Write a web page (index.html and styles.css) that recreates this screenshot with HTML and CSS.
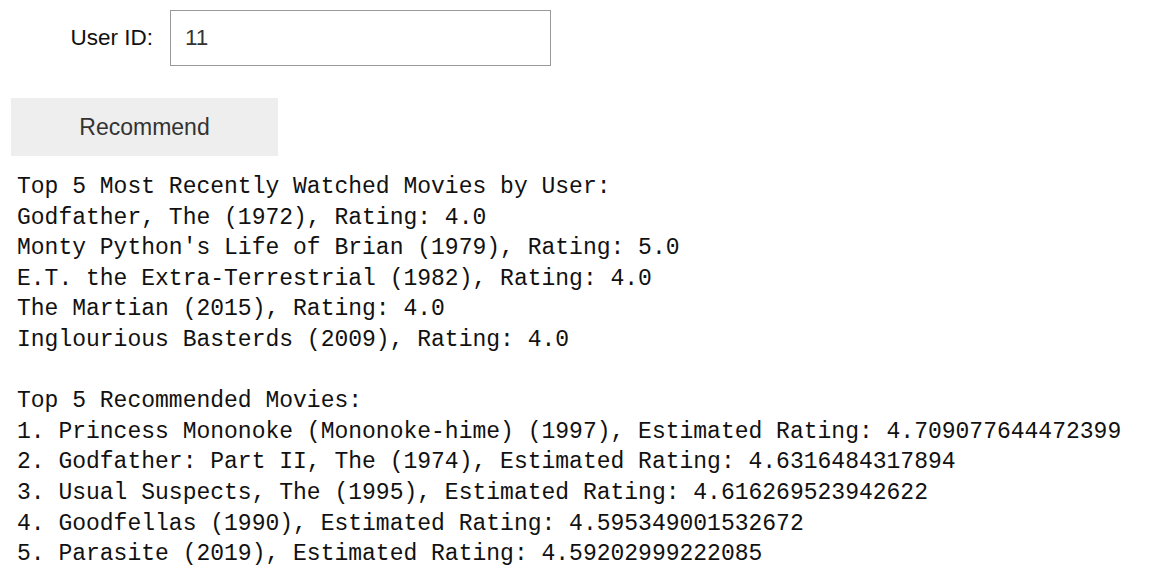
FILE: index.html
```html
<!DOCTYPE html>
<html>
<head>
<meta charset="utf-8">
<link rel="stylesheet" href="styles.css">
</head>
<body>
<div class="widgets">
  <div class="text-row">
    <label class="desc" for="uid">User ID:</label>
    <input id="uid" class="text-input" type="text" value="11">
  </div>
  <button class="btn">Recommend</button>
</div>
<pre class="output">Top 5 Most Recently Watched Movies by User:
Godfather, The (1972), Rating: 4.0
Monty Python's Life of Brian (1979), Rating: 5.0
E.T. the Extra-Terrestrial (1982), Rating: 4.0
The Martian (2015), Rating: 4.0
Inglourious Basterds (2009), Rating: 4.0

Top 5 Recommended Movies:
1. Princess Mononoke (Mononoke-hime) (1997), Estimated Rating: 4.709077644472399
2. Godfather: Part II, The (1974), Estimated Rating: 4.6316484317894
3. Usual Suspects, The (1995), Estimated Rating: 4.616269523942622
4. Goodfellas (1990), Estimated Rating: 4.595349001532672
5. Parasite (2019), Estimated Rating: 4.59202999222085</pre>
</body>
</html>
```

FILE: styles.css
```css
html, body {
  margin: 0;
  padding: 0;
  background: #ffffff;
}

.widgets {
  display: flex;
  flex-direction: column;
  align-items: flex-start;
  padding: 10px 0 0 11px;
  font-family: "Liberation Sans", Arial, sans-serif;
  font-size: 22.5px;
}

.text-row {
  display: flex;
  align-items: center;
  gap: 17px;
  height: 56px;
}

.desc {
  width: 142px;
  text-align: right;
  color: #111111;
}

.text-input {
  box-sizing: border-box;
  width: 381px;
  height: 56px;
  border: 1px solid #999999;
  padding: 0 14px;
  font-family: "Liberation Sans", Arial, sans-serif;
  font-size: 22.5px;
  color: #333333;
  outline: none;
  background: #ffffff;
}

.btn {
  margin-top: 32px;
  width: 267px;
  height: 58px;
  border: none;
  background: #eeeeee;
  color: #333333;
  font-family: "Liberation Sans", Arial, sans-serif;
  font-size: 23px;
  padding: 0;
}

.output {
  margin: 16px 0 0 0;
  padding-left: 17px;
  font-family: "Liberation Mono", "DejaVu Sans Mono", monospace;
  font-size: 23px;
  line-height: 30.6px;
  color: #111111;
}
```
